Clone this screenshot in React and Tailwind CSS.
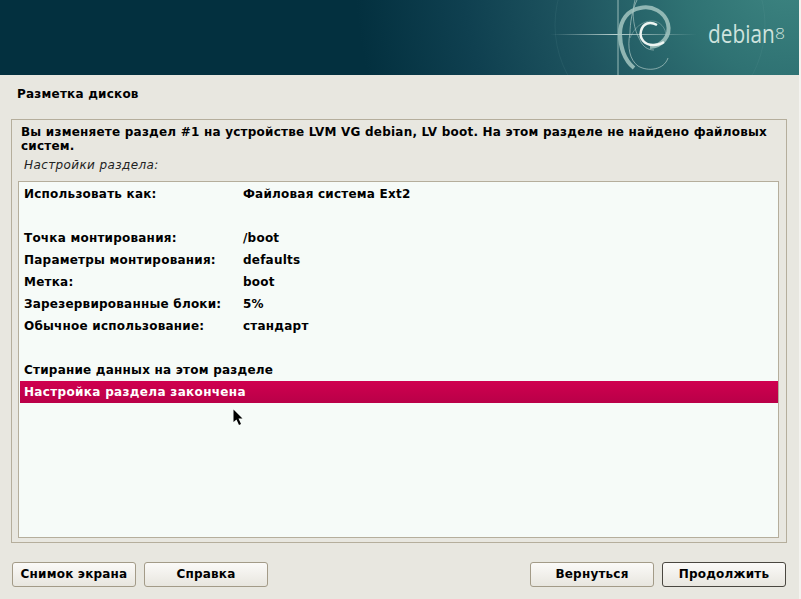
import React from "react";

const rows = [
  ["Использовать как:", "Файловая система Ext2"],
  ["", ""],
  ["Точка монтирования:", "/boot"],
  ["Параметры монтирования:", "defaults"],
  ["Метка:", "boot"],
  ["Зарезервированные блоки:", "5%"],
  ["Обычное использование:", "стандарт"],
  ["", ""],
  ["Стирание данных на этом разделе", ""],
];

// swirl and crosshair from the banner
const Banner = () => (
  <div className="relative h-[75px] shrink-0 overflow-hidden bg-[#03303f]">
    <svg className="absolute inset-0" width="799" height="75" viewBox="0 0 799 75" fill="none">
      <defs>
        <radialGradient id="glow" cx="790" cy="-30" r="435" gradientUnits="userSpaceOnUse">
          <stop offset="0" stopColor="#3e8682" />
          <stop offset="0.25" stopColor="#2f7273" />
          <stop offset="0.5" stopColor="#1f5560" />
          <stop offset="0.75" stopColor="#0f4050" />
          <stop offset="1" stopColor="#03303f" />
        </radialGradient>
        <linearGradient id="hl" x1="550" x2="697" y1="0" y2="0" gradientUnits="userSpaceOnUse">
          <stop offset="0" stopColor="#c8dcd8" stopOpacity="0" />
          <stop offset="0.45" stopColor="#d6e6e2" stopOpacity="0.85" />
          <stop offset="1" stopColor="#c8dcd8" stopOpacity="0" />
        </linearGradient>
      </defs>
      <rect width="799" height="75" fill="url(#glow)" />
      <circle cx="660" cy="25" r="105" stroke="#7fb3ae" strokeOpacity="0.1" strokeWidth="1" />
      <rect x="550" y="34" width="147" height="1" fill="url(#hl)" />
      <rect x="617" y="0" width="2" height="75" fill="#a6c6c2" fillOpacity="0.45" />
      {/* thin rings */}
      <path d="M637 0C632 10 630 24 630 33C627 48 630 60 638 66C648 72 664 70 668 58" stroke="#c4dad6" strokeOpacity="0.6" strokeWidth="1" />
      <path d="M635 0C631 14 634 30 640 40C643 47 648 50 654 50" stroke="#c4dad6" strokeOpacity="0.55" strokeWidth="1" />
      <path d="M630 38C634 28 642 21 652 21C660 21 666 28 666 36" stroke="#c4dad6" strokeOpacity="0.35" strokeWidth="1" />
      {/* thick outer arc */}
      <path d="M634 68C624 60 620 46 620 34C620 20 628 10 640 8C652 5 665 12 668 24C671 36 662 46 650 47" stroke="#a3c5c1" strokeOpacity="0.85" strokeWidth="4" />
      {/* white inner curl */}
      <path d="M657 25C650 21 643 23 641 31C639 39 645 45 653 45C657 45 661 44 664 42" stroke="#eef5f2" strokeWidth="2.5" />
    </svg>
    <div className="absolute left-[708px] top-[17px] font-['Open_Sans',sans-serif] text-[#cfe3de]">
      <span className="block origin-left scale-x-[0.8] text-[26px] font-medium leading-[32px]">debian</span>
    </div>
    <span className="absolute left-[775px] top-[24px] block origin-left scale-x-[1.25] font-['Open_Sans',sans-serif] text-[14px] font-light leading-[20px] text-[#cfe3de]">8</span>
  </div>
);

const Btn = ({ children, active }) => (
  <button
    className={`h-[25px] w-[124px] rounded-[3px] border bg-gradient-to-b from-[#fbfaf8] to-[#e8e6df] pb-[1px] text-[12px] font-bold tracking-[0.2px] text-black ${
      active ? "border-[#4a4740]" : "border-[#a39b88]"
    }`}
  >
    {children}
  </button>
);

export default function App() {
  return (
    <div className="flex h-[599px] w-[801px] overflow-hidden bg-[#f4f3ef] font-['DejaVu_Sans',sans-serif] text-black">
      <div className="flex h-full w-[799px] shrink-0 flex-col bg-[#e8e7e0]">
        <Banner />
        <h1 className="pl-[17px] pt-[12px] text-[12px] font-bold leading-[15px] tracking-[0.22px]">Разметка дисков</h1>

        <div className="ml-[11px] mr-[12px] mt-[17px] flex h-[424px] flex-col border border-[#b5ae9c] pl-[6px] pr-[7px] pb-[4px]">
          <p className="pl-[3px] pt-[5px] text-[12px] font-bold leading-[14px] tracking-[0.22px]">
            Вы изменяете раздел #1 на устройстве LVM VG debian, LV boot. На этом разделе не найдено файловых систем.
          </p>
          <p className="pl-[6px] pt-[5px] text-[12px] italic leading-[14px] tracking-[0.39px] text-[#222]">Настройки раздела:</p>

          <div className="mt-[9px] min-h-0 flex-1 border border-[#b5ae9c] bg-[#f6fbf8] pl-[1px] pt-[1px]">
            {rows.map((r, i) => (
              <div key={i} className="flex h-[22px] items-center pl-[4px] text-[12px] font-bold tracking-[0.22px]">
                <span className="w-[219px] shrink-0 whitespace-nowrap">{r[0]}</span>
                <span>{r[1]}</span>
              </div>
            ))}
            <div className="flex h-[22px] items-center bg-gradient-to-b from-[#d0004f] to-[#b90048] pl-[4px] text-[12px] font-bold tracking-[0.33px] text-white">
              Настройка раздела закончена
            </div>
            {/* mouse pointer left on the screen */}
            <svg className="relative ml-[213px] mt-[6px]" width="11" height="17" viewBox="0 0 11 17">
              <path d="M0.5 0.5V13L3.5 10.5L6 16L8 15L5.5 9.5H9.5Z" fill="#000" />
            </svg>
          </div>
        </div>

        <div className="flex gap-[8px] pl-[12px] pt-[19px]">
          <Btn>Снимок экрана</Btn>
          <Btn>Справка</Btn>
          <div className="w-[246px]" />
          <Btn>Вернуться</Btn>
          <Btn active>Продолжить</Btn>
        </div>
      </div>
    </div>
  );
}
